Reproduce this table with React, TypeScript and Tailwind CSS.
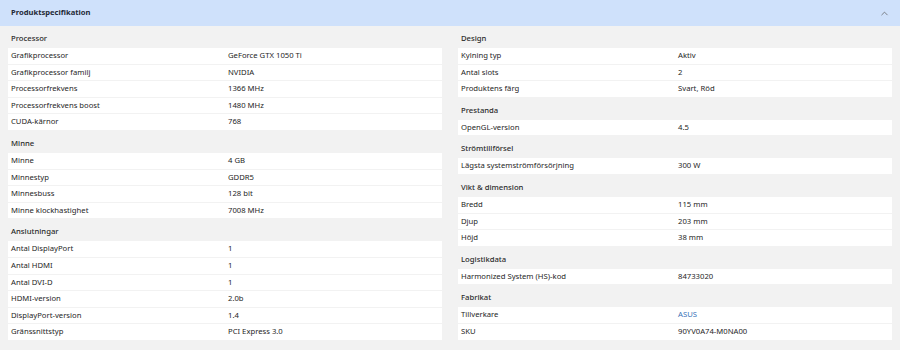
import { ChevronUp } from "lucide-react";

type Row = [string, string, boolean?];
type Section = { title: string; rows: Row[] };

const left: Section[] = [
  {
    title: "Processor",
    rows: [
      ["Grafikprocessor", "GeForce GTX 1050 Ti"],
      ["Grafikprocessor familj", "NVIDIA"],
      ["Processorfrekvens", "1366 MHz"],
      ["Processorfrekvens boost", "1480 MHz"],
      ["CUDA-kärnor", "768"],
    ],
  },
  {
    title: "Minne",
    rows: [
      ["Minne", "4 GB"],
      ["Minnestyp", "GDDR5"],
      ["Minnesbuss", "128 bit"],
      ["Minne klockhastighet", "7008 MHz"],
    ],
  },
  {
    title: "Anslutningar",
    rows: [
      ["Antal DisplayPort", "1"],
      ["Antal HDMI", "1"],
      ["Antal DVI-D", "1"],
      ["HDMI-version", "2.0b"],
      ["DisplayPort-version", "1.4"],
      ["Gränssnittstyp", "PCI Express 3.0"],
    ],
  },
];

const right: Section[] = [
  {
    title: "Design",
    rows: [
      ["Kylning typ", "Aktiv"],
      ["Antal slots", "2"],
      ["Produktens färg", "Svart, Röd"],
    ],
  },
  { title: "Prestanda", rows: [["OpenGL-version", "4.5"]] },
  { title: "Strömtillförsel", rows: [["Lägsta systemströmförsörjning", "300 W"]] },
  {
    title: "Vikt & dimension",
    rows: [
      ["Bredd", "115 mm"],
      ["Djup", "203 mm"],
      ["Höjd", "38 mm"],
    ],
  },
  { title: "Logistikdata", rows: [["Harmonized System (HS)-kod", "84733020"]] },
  {
    title: "Fabrikat",
    rows: [
      ["Tillverkare", "ASUS", true],
      ["SKU", "90YV0A74-M0NA00"],
    ],
  },
];

function SpecColumn({ sections }: { sections: Section[] }) {
  return (
    <div className="flex flex-col">
      {sections.map((s) => (
        <div key={s.title}>
          <div className="h-[22px] pt-[5px] pl-[3px] leading-[14px] font-medium text-[#2b2b2b]">{s.title}</div>
          <div className="flex flex-col">
            {s.rows.map(([k, v, link]) => (
              <div key={k} className="grid grid-cols-2 h-[15.6px] mb-px items-center bg-white">
                <div className="px-[3px] text-[#262626]">{k}</div>
                <div className={link ? "px-[3px] text-[#3b74b8]" : "px-[3px] text-[#262626]"}>{v}</div>
              </div>
            ))}
          </div>
        </div>
      ))}
    </div>
  );
}

export default function App() {
  return (
    <div className="w-[900px] h-[350px] bg-[#f2f2f2] text-[7.7px] overflow-hidden" style={{ fontFamily: '"Noto Sans", sans-serif' }}>
      <div className="h-[26px] bg-[#cfe1fb] flex items-center justify-between pl-[11px] pr-[10px]">
        <span className="font-bold text-[7.6px] text-[#1f2a37]">Produktspecifikation</span>
        <ChevronUp className="w-[11px] h-[11px] text-[#555]" strokeWidth={1.5} />
      </div>
      <div className="grid grid-cols-2 gap-[16px] px-[8px]">
        <SpecColumn sections={left} />
        <SpecColumn sections={right} />
      </div>
    </div>
  );
}
